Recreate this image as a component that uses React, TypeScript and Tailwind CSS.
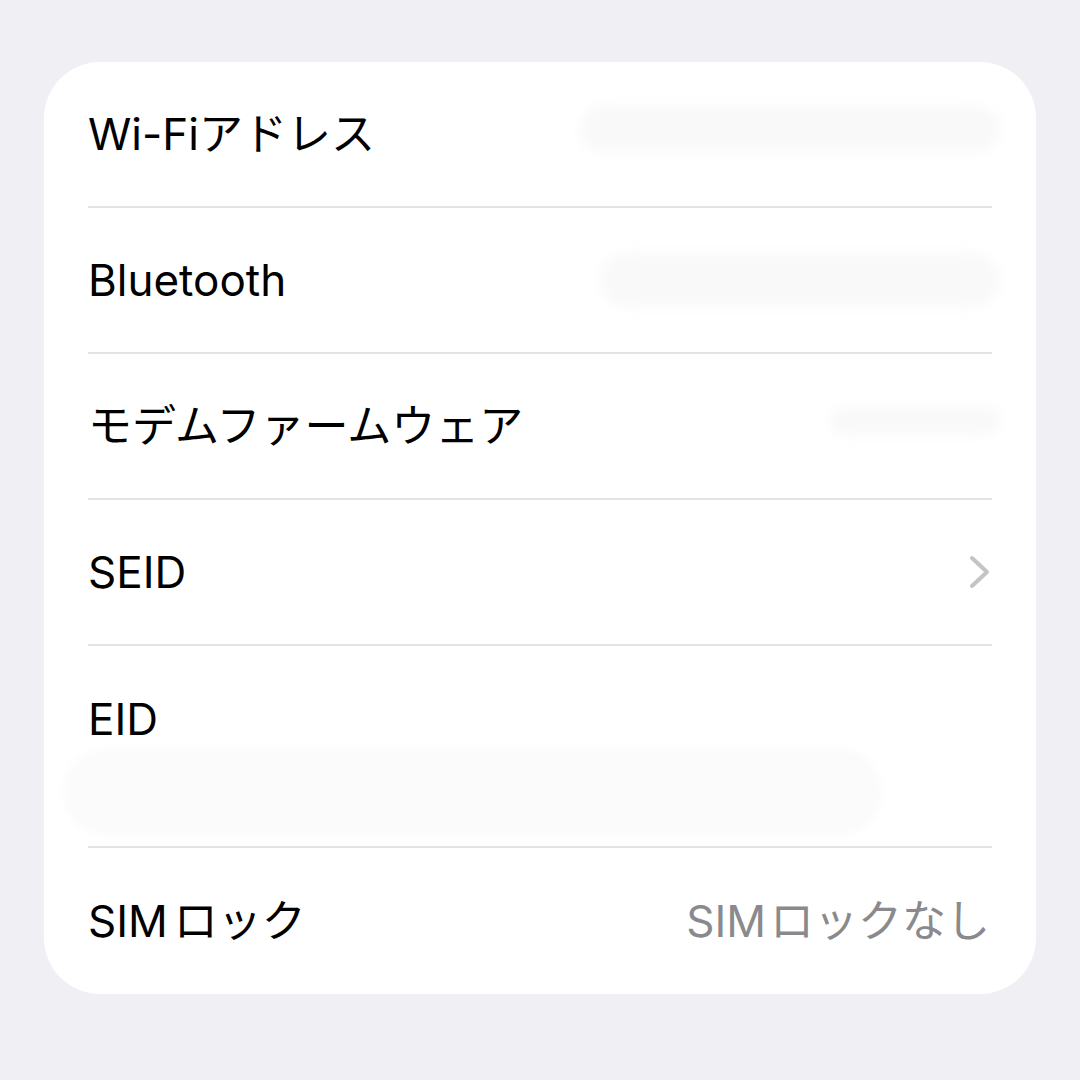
import type { ReactNode } from 'react'

// ── Row ──────────────────────────────────────────────────────────────────────

function Row({ label, children, last }: { label: ReactNode; children?: ReactNode; last?: boolean }) {
  return (
    <div
      className={`flex items-center justify-between h-[146px] ${last ? '' : 'border-b-2 border-[#e3e3e5]'}`}
    >
      <span className="text-[44px] leading-none text-black whitespace-nowrap">{label}</span>
      {children}
    </div>
  )
}

function Chevron() {
  return (
    <svg width="22" height="34" viewBox="0 0 22 34" className="mr-[1px]">
      <path d="M3 3 L18 17 L3 31" fill="none" stroke="#c4c4c7" strokeWidth="4" strokeLinecap="round" strokeLinejoin="round" />
    </svg>
  )
}

function Redacted({ className }: { className: string }) {
  return <div className={`rounded-full bg-[#f9f9fa] blur-[6px] ${className}`} />
}

// ── App ──────────────────────────────────────────────────────────────────────

export default function App() {
  return (
    <div
      className="w-[1080px] h-[1080px] bg-[#efeff4] pt-[62px] px-[44px]"
      style={{ fontFamily: 'Inter, "Noto Sans CJK JP", sans-serif' }}
    >
      <div className="bg-white rounded-[56px] px-[44px]">
        <Row label="Wi-Fiアドレス">
          <Redacted className="w-[420px] h-[46px] -mr-[8px] -mt-[10px]" />
        </Row>
        <Row label="Bluetooth">
          <Redacted className="w-[400px] h-[54px] -mr-[8px]" />
        </Row>
        <Row label="モデムファームウェア">
          <Redacted className="w-[170px] h-[28px] -mr-[8px] -mt-[10px]" />
        </Row>
        <Row label="SEID">
          <Chevron />
        </Row>
        <div className="h-[202px] border-b-2 border-[#e3e3e5] flex flex-col">
          <span className="pt-[51px] text-[44px] leading-none text-black">EID</span>
          <div className="mt-[10px] -ml-[22px] w-[814px] h-[82px] rounded-[40px] bg-[#fbfbfb] blur-[3px] shadow-[0_0_6px_rgba(0,0,0,0.04)]" />
        </div>
        <Row label={<>SIM<span className="ml-[6px]">ロック</span></>} last>
          <span className="text-[44px] leading-none text-[#8a8a8e] whitespace-nowrap mr-[2px]">
            SIM<span className="ml-[4px]">ロックなし</span>
          </span>
        </Row>
      </div>
    </div>
  )
}
